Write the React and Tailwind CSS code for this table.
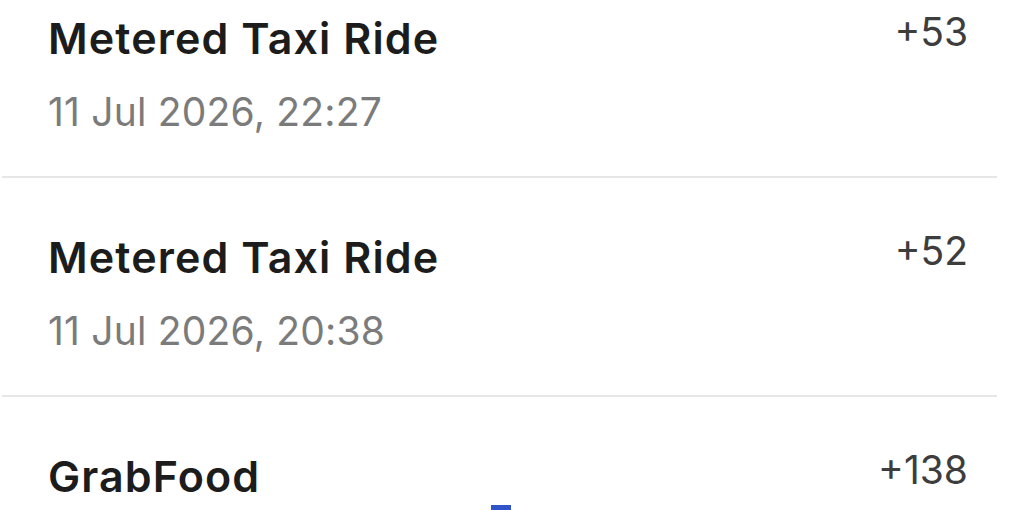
import React from "react";

const rows = [
  { title: "Metered Taxi Ride", date: "11 Jul 2026, 22:27", amount: "+53" },
  { title: "Metered Taxi Ride", date: "11 Jul 2026, 20:38", amount: "+52" },
  { title: "GrabFood", date: null, amount: "+138" },
];

export default function App() {
  return (
    <div
      className="relative w-[1024px] h-[510px] overflow-hidden bg-white"
      style={{ fontFamily: "Inter, 'Noto Sans', sans-serif" }}
    >
      <div className="-mt-[41px] ml-[2px] w-[995px]">
        {rows.map((r, i) => (
          <div key={i}>
            <div className="flex justify-between pt-[49px] pb-[40px] pl-[46px] pr-[29px]">
              <div className="flex flex-col">
                <div className="mt-[4px] text-[43px] leading-[52px] font-semibold text-[#1c1c1c] tracking-[1.1px]">
                  {r.title}
                </div>
                {r.date && (
                  <div className="mt-[24px] text-[39px] leading-[48px] text-[#7b7b7b] tracking-[0.2px]">
                    {r.date}
                  </div>
                )}
              </div>
              <div className="text-[39px] leading-[48px] text-[#3d3d3d]">
                {r.amount}
              </div>
            </div>
            {r.date && <div className="h-[2px] bg-[#e6e6e6]" />}
          </div>
        ))}
      </div>
      <div className="absolute left-[491px] top-[505px] w-[20px] h-[8px] bg-[#2f55c8]" />
    </div>
  );
}
